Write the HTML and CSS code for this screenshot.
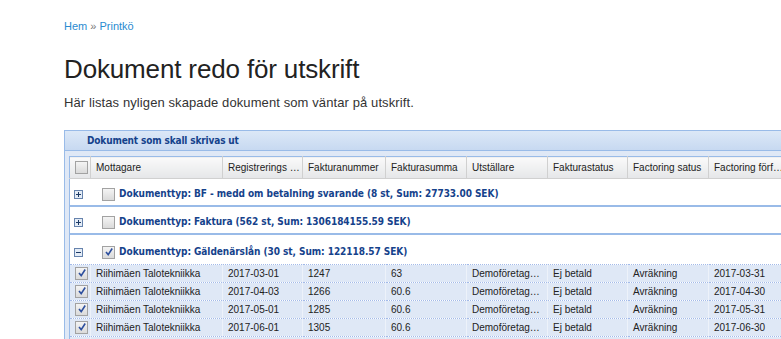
FILE: index.html
```html
<!DOCTYPE html>
<html lang="sv">
<head>
    <meta charset="UTF-8">
    <title>Printkö</title>
    <link rel="stylesheet" href="styles.css">
</head>
<body>
<div class="page">

    <!-- Breadcrumb -->
    <div class="crumbs"><a href="#">Hem</a> <span class="sep">»</span> <a href="#">Printkö</a></div>

    <h1>Dokument redo för utskrift</h1>
    <p class="lead">Här listas nyligen skapade dokument som väntar på utskrift.</p>

    <!-- Grid panel -->
    <div class="panel">
        <div class="panel-title">Dokument som skall skrivas ut</div>
        <div class="panel-body">
            <table class="grid">
                <colgroup>
                    <col style="width:21px"><col style="width:132px"><col style="width:80px">
                    <col style="width:83px"><col style="width:81px"><col style="width:81px">
                    <col style="width:80px"><col style="width:81px"><col style="width:81px">
                </colgroup>
                <thead>
                    <tr>
                        <th class="chk"><span class="cb"></span></th>
                        <th>Mottagare</th>
                        <th>Registrerings …</th>
                        <th>Fakturanummer</th>
                        <th>Fakturasumma</th>
                        <th>Utställare</th>
                        <th>Fakturastatus</th>
                        <th>Factoring satus</th>
                        <th>Factoring förf…</th>
                    </tr>
                </thead>
                <tbody>
                    <tr class="group-hd">
                        <td colspan="9"><div class="gh">
                            <svg class="toggle" width="9" height="9" viewBox="0 0 9 9"><rect x="0.5" y="0.5" width="8" height="8" fill="#e4ecf6" stroke="#6683ad"/><path d="M2 4.5h5M4.5 2v5" stroke="#1d3a66"/></svg>
                            <span class="cb"></span>Dokumenttyp: BF - medd om betalning svarande (8 st, Sum: 27733.00 SEK)
                        </div></td>
                    </tr>
                    <tr class="group-hd">
                        <td colspan="9"><div class="gh">
                            <svg class="toggle" width="9" height="9" viewBox="0 0 9 9"><rect x="0.5" y="0.5" width="8" height="8" fill="#e4ecf6" stroke="#6683ad"/><path d="M2 4.5h5M4.5 2v5" stroke="#1d3a66"/></svg>
                            <span class="cb"></span>Dokumenttyp: Faktura (562 st, Sum: 1306184155.59 SEK)
                        </div></td>
                    </tr>
                    <tr class="group-hd open">
                        <td colspan="9"><div class="gh">
                            <svg class="toggle" width="9" height="9" viewBox="0 0 9 9"><rect x="0.5" y="0.5" width="8" height="8" fill="#e4ecf6" stroke="#6683ad"/><path d="M2 4.5h5" stroke="#1d3a66"/></svg>
                            <span class="cb checked"><svg width="10" height="10" viewBox="0 0 10 10"><path d="M2 5l2.2 2.6L8.2 1.5" fill="none" stroke="#2d4f9e" stroke-width="1.6"/></svg></span>Dokumenttyp: Gäldenärslån (30 st, Sum: 122118.57 SEK)
                        </div></td>
                    </tr>
                    <tr class="row">
                        <td class="chk"><span class="cb checked"><svg width="10" height="10" viewBox="0 0 10 10"><path d="M2 5l2.2 2.6L8.2 1.5" fill="none" stroke="#2d4f9e" stroke-width="1.6"/></svg></span></td>
                        <td>Riihimäen Talotekniikka</td><td>2017-03-01</td><td>1247</td><td>63</td>
                        <td>Demoföretag…</td><td>Ej betald</td><td>Avräkning</td><td>2017-03-31</td>
                    </tr>
                    <tr class="row">
                        <td class="chk"><span class="cb checked"><svg width="10" height="10" viewBox="0 0 10 10"><path d="M2 5l2.2 2.6L8.2 1.5" fill="none" stroke="#2d4f9e" stroke-width="1.6"/></svg></span></td>
                        <td>Riihimäen Talotekniikka</td><td>2017-04-03</td><td>1266</td><td>60.6</td>
                        <td>Demoföretag…</td><td>Ej betald</td><td>Avräkning</td><td>2017-04-30</td>
                    </tr>
                    <tr class="row">
                        <td class="chk"><span class="cb checked"><svg width="10" height="10" viewBox="0 0 10 10"><path d="M2 5l2.2 2.6L8.2 1.5" fill="none" stroke="#2d4f9e" stroke-width="1.6"/></svg></span></td>
                        <td>Riihimäen Talotekniikka</td><td>2017-05-01</td><td>1285</td><td>60.6</td>
                        <td>Demoföretag…</td><td>Ej betald</td><td>Avräkning</td><td>2017-05-31</td>
                    </tr>
                    <tr class="row">
                        <td class="chk"><span class="cb checked"><svg width="10" height="10" viewBox="0 0 10 10"><path d="M2 5l2.2 2.6L8.2 1.5" fill="none" stroke="#2d4f9e" stroke-width="1.6"/></svg></span></td>
                        <td>Riihimäen Talotekniikka</td><td>2017-06-01</td><td>1305</td><td>60.6</td>
                        <td>Demoföretag…</td><td>Ej betald</td><td>Avräkning</td><td>2017-06-30</td>
                    </tr>
                    <tr class="row">
                        <td class="chk"><span class="cb checked"><svg width="10" height="10" viewBox="0 0 10 10"><path d="M2 5l2.2 2.6L8.2 1.5" fill="none" stroke="#2d4f9e" stroke-width="1.6"/></svg></span></td>
                        <td>Riihimäen Talotekniikka</td><td>2017-07-03</td><td>1324</td><td>60.6</td>
                        <td>Demoföretag…</td><td>Ej betald</td><td>Avräkning</td><td>2017-07-31</td>
                    </tr>
                </tbody>
            </table>
        </div>
    </div>

</div>
</body>
</html>
```

FILE: styles.css
```css
body {
    margin: 0;
    font-family: "Liberation Sans", Arial, sans-serif;
    background-color: #fff;
    color: #222;
    overflow: hidden;
}
.page {
    padding-left: 64px;
}
a {
    color: #2a8bd0;
    text-decoration: none;
}
.crumbs {
    font-size: 11px;
    line-height: 13px;
    padding-top: 20px;
    color: #777;
}
h1 {
    font-size: 26px;
    font-weight: normal;
    line-height: 30px;
    margin: 21px 0 0;
    letter-spacing: -0.15px;
    color: #222;
}
.lead {
    font-size: 13px;
    line-height: 16px;
    margin: 11px 0 0;
    letter-spacing: 0.1px;
    color: #333;
}
/* Grid panel */
.panel {
    margin-top: 19px;
    width: 760px;
    border: 1px solid #99bbe8;
    background-color: #dfe8f6;
}
.panel-title {
    height: 19px;
    line-height: 20px;
    padding-left: 22px;
    font-family: "DejaVu Sans Condensed", "DejaVu Sans", sans-serif;
    font-size: 10px;
    font-weight: bold;
    letter-spacing: -0.15px;
    color: #15428b;
    background: linear-gradient(#dce8f7, #c7d9f1);
    border-bottom: 1px solid #99bbe8;
}
.panel-body {
    padding: 5px 0 0 4px;
}
.grid {
    border-collapse: collapse;
    table-layout: fixed;
    width: 720px;
    border: 1px solid #99bbe8;
    background-color: #fff;
    font-size: 10px;
}
.grid th {
    height: 21px;
    padding: 0 5px;
    text-align: left;
    font-weight: normal;
    color: #222;
    white-space: nowrap;
    overflow: hidden;
    background: linear-gradient(#fafafa, #e5e6e8);
    border-right: 1px solid #d0d0d0;
    border-bottom: 1px solid #d0d0d0;
}
.grid .chk {
    padding: 0 0 0 5px;
}
.cb {
    display: inline-block;
    width: 11px;
    height: 11px;
    border: 1px solid #a2a2a2;
    background: linear-gradient(#f4f4f4, #dadada);
    vertical-align: middle;
    position: relative;
}
.cb svg {
    position: absolute;
    left: 1px;
    top: 0;
}
/* Group headers */
.group-hd td {
    padding: 0;
    border-bottom: 2px solid #99bbe8;
}
.gh {
    box-sizing: border-box;
    height: 26px;
    padding: 8px 0 0 4px;
    line-height: 14px;
    font-family: "DejaVu Sans Condensed", "DejaVu Sans", sans-serif;
    font-size: 10px;
    font-weight: bold;
    letter-spacing: -0.05px;
    color: #15428b;
    white-space: nowrap;
    overflow: hidden;
}
.gh .toggle {
    vertical-align: middle;
    margin-right: 16px;
}
.gh .cb {
    margin-right: 4px;
}
.group-hd.open td {
    border-bottom: 1px dotted #a3bae9;
}
.group-hd.open .gh {
    height: 29px;
    padding-top: 10px;
}
/* Data rows */
.row td {
    height: 17px;
    padding: 0 5px;
    background-color: #dfe8f6;
    border-bottom: 1px dotted #a3bae9;
    border-right: 1px solid #edf2fa;
    white-space: nowrap;
    overflow: hidden;
    color: #222;
}
```
